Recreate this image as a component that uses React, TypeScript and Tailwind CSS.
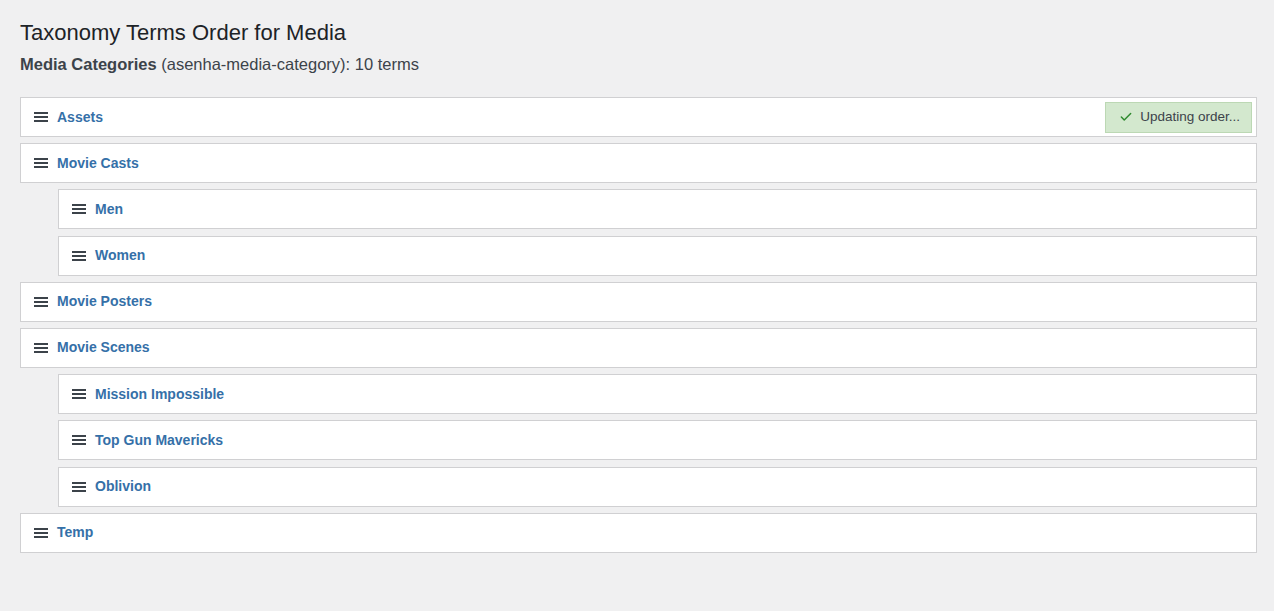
import { Check } from 'lucide-react';

type Term = { name: string; depth: number; status?: boolean };

const terms: Term[] = [
  { name: 'Assets', depth: 0, status: true },
  { name: 'Movie Casts', depth: 0 },
  { name: 'Men', depth: 1 },
  { name: 'Women', depth: 1 },
  { name: 'Movie Posters', depth: 0 },
  { name: 'Movie Scenes', depth: 0 },
  { name: 'Mission Impossible', depth: 1 },
  { name: 'Top Gun Mavericks', depth: 1 },
  { name: 'Oblivion', depth: 1 },
  { name: 'Temp', depth: 0 },
];

function DragHandle() {
  return (
    <svg width="14" height="12" viewBox="0 0 14 12" className="shrink-0">
      <rect x="0" y="1" width="14" height="2" fill="#3c434a" />
      <rect x="0" y="5" width="14" height="2" fill="#3c434a" />
      <rect x="0" y="9" width="14" height="2" fill="#3c434a" />
    </svg>
  );
}

export default function App() {
  return (
    <div className="min-h-screen bg-[#f0f0f1] px-5 pt-[18px] font-['Liberation_Sans',Arial,sans-serif] text-[#1d2327]">
      <h1 className="text-[22px] leading-[30px] font-normal">Taxonomy Terms Order for Media</h1>
      <p className="mt-[5px] text-[16.5px] leading-[22px] text-[#3c434a]">
        <span className="font-bold">Media Categories</span> (asenha-media-category): 10 terms
      </p>

      <ul className="mt-[22px] mr-[-3px] flex flex-col gap-[6.2px]">
        {terms.map((term) => (
          <li key={term.name} className={term.depth === 1 ? 'pl-[38px]' : ''}>
            <div className="flex h-[40px] items-center border border-[#d0d0d2] bg-white pl-[13px] pr-[4px]">
              <DragHandle />
              <span className="ml-[9px] text-[14px] font-bold text-[#3570a8]">{term.name}</span>
              {term.status && (
                <div className="ml-auto flex h-[31px] items-center gap-[7px] border border-[#bcd8b4] bg-[#d3e8ce] pl-[13px] pr-[11px] text-[13.5px] text-[#3c434a]">
                  <Check size={14} strokeWidth={2.5} className="text-[#2e8a2e]" />
                  <span>Updating order...</span>
                </div>
              )}
            </div>
          </li>
        ))}
      </ul>
    </div>
  );
}
